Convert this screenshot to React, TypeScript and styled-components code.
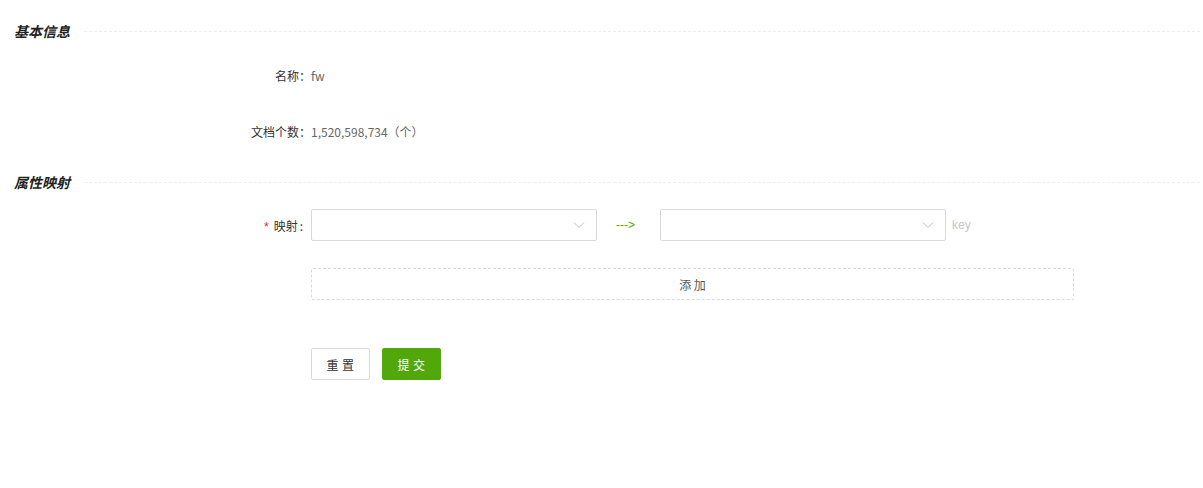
import styled, {createGlobalStyle} from 'styled-components'

const GlobalStyle = createGlobalStyle`
  html, body {
    margin: 0;
    background: #fff;
  }
  body {
    font-family: "Liberation Sans", "Noto Sans CJK SC", sans-serif;
    font-size: 12px;
    color: #333;
  }
`

const Chevron = () => (
  <svg width="12" height="12" viewBox="0 0 12 12" fill="none">
    <path d="M1 3.5 L6 8.5 L11 3.5" stroke="#bfbfbf" strokeWidth="1" />
  </svg>
)

const Section = ({title}: {title: string}) => (
  <SectionHeader>
    <SectionTitle>{title}</SectionTitle>
    <SectionLine />
  </SectionHeader>
)

const Select = () => (
  <SelectBox>
    <Chevron />
  </SelectBox>
)

export default function App() {
  return (
    <Page>
      <GlobalStyle />
      <Section title="基本信息" />
      <InfoList>
        <Row>
          <Label>名称：</Label>
          <Value>fw</Value>
        </Row>
        <Row>
          <Label>文档个数：</Label>
          <Value>1,520,598,734（个）</Value>
        </Row>
      </InfoList>
      <Section title="属性映射" />
      <MapForm>
        <Row>
          <Label>
            <Required>*</Required>映射<Colon>:</Colon>
          </Label>
          <Controls>
            <Select />
            <Arrow>---&gt;</Arrow>
            <Select />
            <Hint>key</Hint>
          </Controls>
        </Row>
        <Row>
          <Label />
          <AddButton>添 加</AddButton>
        </Row>
        <Actions>
          <Label />
          <Button>重 置</Button>
          <Button $primary>提 交</Button>
        </Actions>
      </MapForm>
    </Page>
  )
}

const Page = styled.div`
  padding: 20px 3px 0 0;
  height: 488px;
  box-sizing: border-box;
`
const SectionHeader = styled.div`
  display: flex;
  align-items: center;
  height: 22px;
  padding-left: 14px;
`
const SectionTitle = styled.h4`
  margin: 0;
  font-family: "Noto Sans CJK SC", sans-serif;
  font-size: 14px;
  font-weight: 700;
  font-style: italic;
  color: #222;
  line-height: 22px;
`
const SectionLine = styled.div`
  flex: 1;
  margin-left: 14px;
  border-top: 1px dashed #ececec;
`
const InfoList = styled.div`
  display: flex;
  flex-direction: column;
  gap: 24px;
  margin: 17px 0 24px;
`
const Row = styled.div`
  display: flex;
  align-items: center;
  height: 32px;
`
const Label = styled.div`
  width: 311px;
  flex-shrink: 0;
  text-align: right;
  font-family: "Noto Sans CJK SC", sans-serif;
  font-size: 12px;
  color: #333;
  box-sizing: border-box;
`
const Required = styled.span`
  color: #f5222d;
  margin-right: 5px;
  font-family: SimSun, "Liberation Sans", sans-serif;
`
const Colon = styled.span`
  margin: 0 8px 0 2px;
`
const Value = styled.div`
  font-family: "Noto Sans CJK SC", sans-serif;
  font-size: 12px;
  color: #666;
`
const MapForm = styled.div`
  display: flex;
  flex-direction: column;
  margin-top: 16px;
  gap: 27px;
`
const Controls = styled.div`
  display: flex;
  align-items: center;
`
const SelectBox = styled.div`
  width: 286px;
  height: 32px;
  box-sizing: border-box;
  border: 1px solid #d9d9d9;
  border-radius: 2px;
  display: flex;
  align-items: center;
  justify-content: flex-end;
  padding-right: 11px;
`
const Arrow = styled.span`
  width: 63px;
  padding-right: 6px;
  box-sizing: border-box;
  text-align: center;
  color: #52a70a;
  font-size: 12px;
`
const Hint = styled.span`
  margin-left: 6px;
  color: #c6c6c6;
  font-size: 12px;
`
const AddButton = styled.button`
  width: 763px;
  height: 32px;
  border: 1px dashed #d9d9d9;
  border-radius: 2px;
  background: #fff;
  font-family: "Noto Sans CJK SC", sans-serif;
  font-size: 12px;
  color: #555;
  padding: 0;
`
const Actions = styled(Row)`
  margin-top: 21px;
  gap: 12px;
  & > div {
    margin-right: -12px;
  }
`
const Button = styled.button<{$primary?: boolean}>`
  width: 59px;
  height: 32px;
  border-radius: 2px;
  border: 1px solid ${p => (p.$primary ? '#52a70a' : '#d9d9d9')};
  background: ${p => (p.$primary ? '#52a70a' : '#fff')};
  color: ${p => (p.$primary ? '#fff' : '#333')};
  font-family: "Noto Sans CJK SC", sans-serif;
  font-size: 12px;
  letter-spacing: 0.5px;
  padding: 0;
`
